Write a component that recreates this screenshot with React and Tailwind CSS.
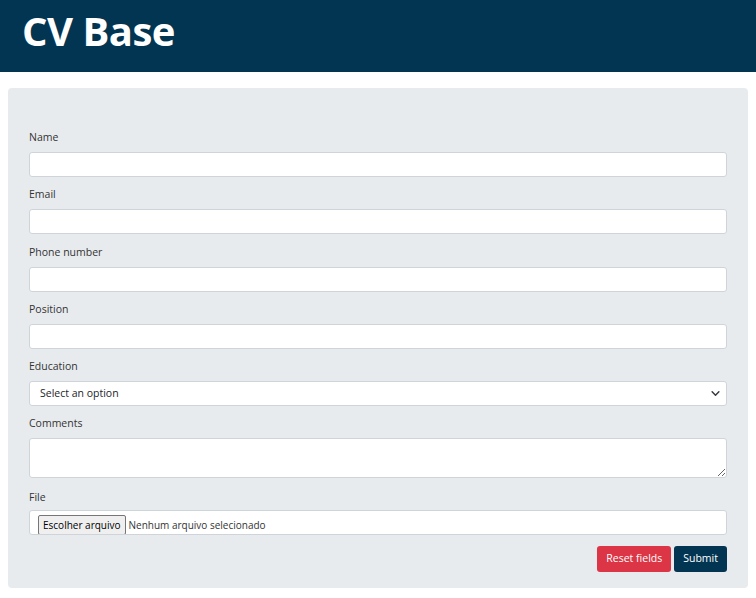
import React, { useState } from "react";

const fields = [
  { name: "name", label: "Name" },
  { name: "email", label: "Email" },
  { name: "phone", label: "Phone number" },
  { name: "position", label: "Position" },
];

const inputClass =
  "block w-full h-[25px] rounded-[3px] border border-[#ced4da] bg-white px-[10px] text-[10.5px] text-[#212529] outline-none";

const App = () => {
  const [formData, setFormData] = useState({
    name: "",
    email: "",
    phone: "",
    position: "",
    education: "",
    comments: "",
  });

  const handleChange = (e) => {
    setFormData({ ...formData, [e.target.name]: e.target.value });
  };

  const handleReset = () => {
    setFormData({ name: "", email: "", phone: "", position: "", education: "", comments: "" });
  };

  return (
    <div className="min-h-[598px] bg-white font-['Open_Sans',_'Noto_Sans',_sans-serif] text-[#212529]">
      {/* Header */}
      <header className="h-[72px] bg-[#023552] px-[22px] pt-[4px]">
        <h1 className="text-[40px] font-bold leading-[54px] text-white tracking-[-0.5px]">CV Base</h1>
      </header>

      {/* Form card */}
      <div className="px-[8px] pt-[16px]">
        <form
          className="rounded-[4px] bg-[#e8ebee] px-[21px] pt-[41px] pb-[16px]"
          onSubmit={(e) => e.preventDefault()}
        >
          {fields.map((f) => (
            <div key={f.name} className="mb-[9.25px]">
              <label className="block text-[10.5px] leading-[16px] mb-[7px] text-[#333]">{f.label}</label>
              <input
                type="text"
                name={f.name}
                value={formData[f.name]}
                onChange={handleChange}
                className={inputClass}
              />
            </div>
          ))}

          <div className="mb-[9.25px]">
            <label className="block text-[10.5px] leading-[16px] mb-[7px] text-[#333]">Education</label>
            <div className="relative">
              <select
                name="education"
                value={formData.education}
                onChange={handleChange}
                className={inputClass + " appearance-none"}
              >
                <option value="">Select an option</option>
                <option value="high-school">High school</option>
                <option value="bachelor">Bachelor</option>
                <option value="master">Master</option>
              </select>
              <svg
                className="pointer-events-none absolute right-[6px] top-[8px]"
                width="11"
                height="9"
                viewBox="0 0 16 16"
              >
                <path d="M2 5l6 6 6-6" fill="none" stroke="#343a40" strokeWidth="2.6" strokeLinecap="round" strokeLinejoin="round" />
              </svg>
            </div>
          </div>

          <div className="mb-[11px]">
            <label className="block text-[10.5px] leading-[16px] mb-[7px] text-[#333]">Comments</label>
            <textarea
              name="comments"
              value={formData.comments}
              onChange={handleChange}
              className="block w-full h-[40px] rounded-[3px] border border-[#ced4da] bg-white px-[10px] py-[4px] text-[10.5px] outline-none"
            />
          </div>

          <div className="mb-[11px]">
            <label className="block text-[10.5px] leading-[16px] mb-[5px] text-[#333]">File</label>
            <div className="flex h-[25px] items-start overflow-hidden rounded-[3px] border border-[#ced4da] bg-white pl-[8px] pt-[4px]">
              <span className="h-[20px] rounded-[2px] border border-[#767676] bg-[#efefef] px-[4px] text-[10px] leading-[18px] text-black">
                Escolher arquivo
              </span>
              <span className="ml-[3px] text-[10px] leading-[20px] text-[#333]">Nenhum arquivo selecionado</span>
            </div>
          </div>

          <div className="flex justify-end gap-[3px]">
            <button
              type="button"
              onClick={handleReset}
              className="h-[26px] rounded-[3px] bg-[#dc3545] px-[9px] text-[10.5px] text-white"
            >
              Reset fields
            </button>
            <button type="submit" className="h-[26px] rounded-[3px] bg-[#023552] px-[9px] text-[10.5px] text-white">
              Submit
            </button>
          </div>
        </form>
      </div>
    </div>
  );
};

export default App;
